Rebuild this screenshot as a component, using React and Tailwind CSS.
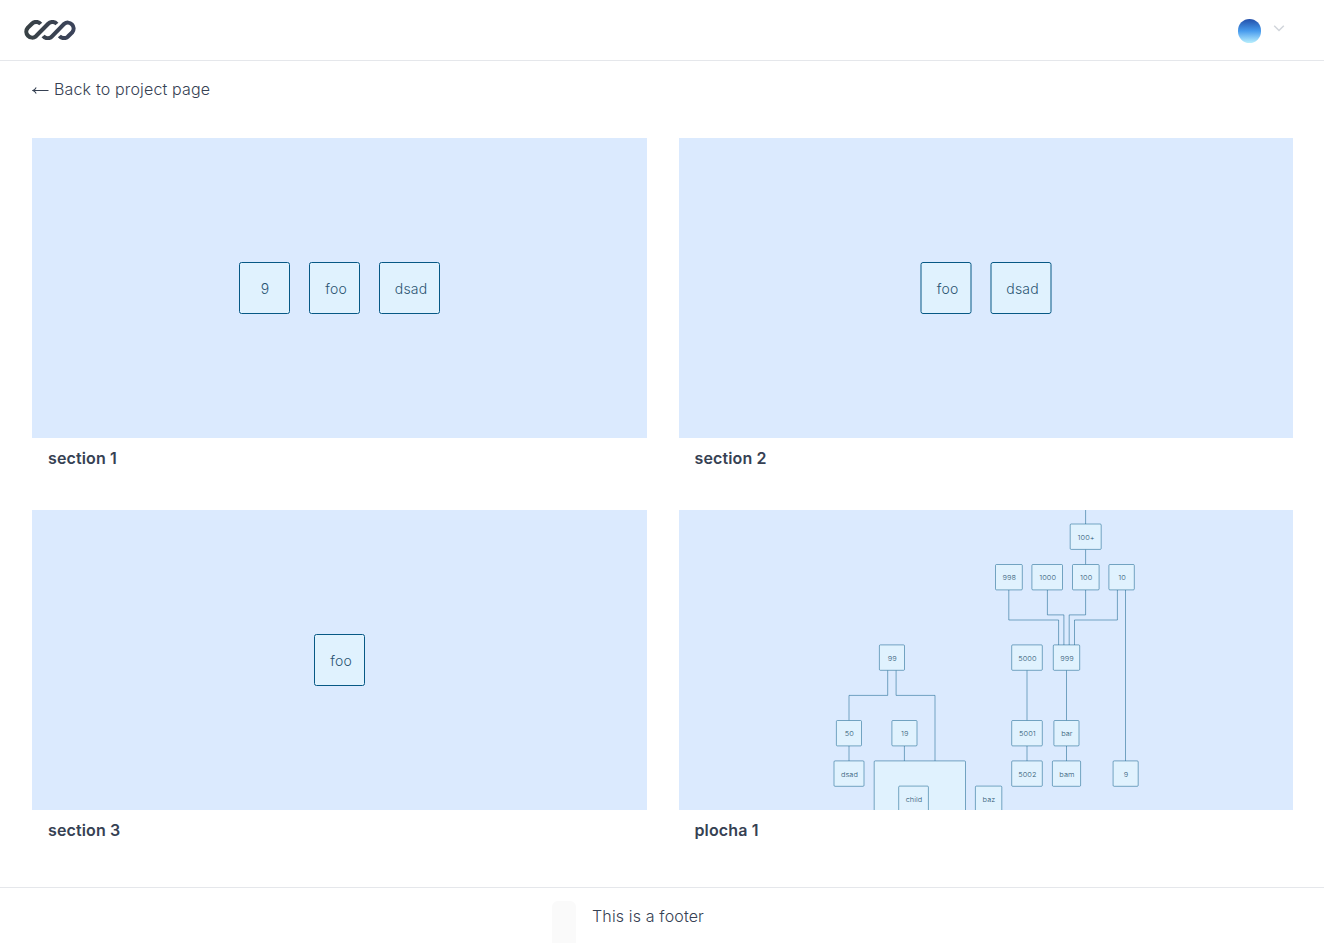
import React from "react";

const sections = [
  {
    title: "section 1",
    font: 14,
    stroke: 1,
    radius: 2,
    nodes: [
      ["9", 207.5, 124.5, 50, 51],
      ["foo", 277.5, 124.5, 50, 51],
      ["dsad", 347.5, 124.5, 60, 51],
    ],
    lines: [],
  },
  {
    title: "section 2",
    font: 14,
    stroke: 1,
    radius: 2,
    nodes: [
      ["foo", 242, 124.5, 50, 51],
      ["dsad", 312, 124.5, 60, 51],
    ],
    lines: [],
  },
  {
    title: "section 3",
    font: 14,
    stroke: 1,
    radius: 2,
    nodes: [["foo", 282.5, 124.5, 50, 51]],
    lines: [],
  },
  {
    title: "plocha 1",
    font: 7,
    stroke: 0.5,
    radius: 1,
    nodes: [
      ["100+", 391.2, 14, 31, 25.4],
      ["998", 316.5, 54.5, 26.8, 25.4],
      ["1000", 352.9, 54.5, 30.6, 25.4],
      ["100", 393.5, 54.5, 26.6, 25.4],
      ["10", 429.9, 54.5, 25.4, 25.4],
      ["99", 200.4, 134.9, 25.1, 25.4],
      ["5000", 332.7, 134.9, 30.6, 25.4],
      ["999", 374.3, 134.9, 26.4, 25.4],
      ["50", 157.4, 210.5, 25.1, 25.4],
      ["19", 212.9, 210.5, 25.1, 25.4],
      ["5001", 332.7, 210.5, 30.6, 25.4],
      ["bar", 374.9, 210.5, 25.1, 25.4],
      ["dsad", 155, 250.9, 30, 25.4],
      ["", 195.2, 250.9, 91.3, 80],
      ["child", 219.7, 276.1, 29.7, 40],
      ["baz", 296.4, 276.1, 26.4, 40],
      ["5002", 332.7, 250.9, 30.6, 25.4],
      ["bam", 373.4, 250.9, 28.2, 25.4],
      ["9", 434.1, 250.9, 25.1, 25.4],
    ],
    lines: [
      "M406.6 0V14",
      "M406.6 39.4V54.5",
      "M329.8 79.9V110H379.6V134.9",
      "M368.4 79.9V104.9H384.9V134.9",
      "M406.6 79.9V104.9H390.2V134.9",
      "M438.4 79.9V110H395.5V134.9",
      "M446.5 79.9V250.9",
      "M208.7 160.3V185.4H170V210.5",
      "M217.1 160.3V185.4H256V250.9",
      "M170 235.9V250.9",
      "M225.4 235.9V250.9",
      "M348 160.3V210.5",
      "M348 235.9V250.9",
      "M387.5 160.3V210.5",
      "M387.5 235.9V250.9",
    ],
  },
];

function Diagram({ nodes, lines, font, stroke, radius }) {
  const large = font > 10;
  const stretch = large ? 1 : 1.12;
  return (
    <svg className="block h-[300px] w-full bg-[#dbeafe]" aria-hidden="true">
      <g fill="none" stroke="#075985" strokeWidth={stroke}>
        {lines.map((d) => (
          <path key={d} d={d} />
        ))}
      </g>
      {nodes.map(([label, x, y, w, h]) => (
        <g key={label + x + y}>
          <rect x={x} y={y} width={w} height={h} rx={radius} fill="#e0f2fe" stroke="#075985" strokeWidth={stroke} />
          <text
            transform={`translate(${x + w / 2 + (large ? (label.length > 1 ? 1.6 : 0.5) : 0.4)} ${y + (large ? 31.5 : 15.7)}) scale(${stretch} 1)`}
            textAnchor="middle"
            fontSize={large ? font : 6.6}
            letterSpacing={large ? 0.2 : 0.05}
            className="fill-[#2b5572] font-light"
          >
            {label}
          </text>
        </g>
      ))}
    </svg>
  );
}

function Logo() {
  return (
    <svg width="52" height="20" viewBox="0 0 52 20" fill="none" strokeWidth="4.1" className="block">
      <defs>
        <linearGradient id="logo" x1="0" x2="52" y1="0" y2="0" gradientUnits="userSpaceOnUse">
          <stop stopColor="#384144" />
          <stop offset="1" stopColor="#3b435b" />
        </linearGradient>
      </defs>
      <g stroke="url(#logo)">
        <path d="M16.7 4A6 6 0 0 0 7.9 3.7L3.7 7.9A5.9 5.9 0 0 0 11.9 16.3L24.2 3.8A5.9 5.9 0 0 1 32.9 4" />
        <path d="M19.1 16A5.9 5.9 0 0 0 28 16.3L40.2 3.8A5.9 5.9 0 0 1 48.4 12.1L44.2 16.3A5.9 5.9 0 0 1 35.4 16" />
      </g>
    </svg>
  );
}

export default function App() {
  return (
    <div className="flex h-[943px] flex-col overflow-hidden bg-white font-['Inter',sans-serif] text-base text-gray-700">
      <header className="flex h-[61px] shrink-0 items-center justify-between border-b border-gray-200 pl-6 pr-[39px]">
        <Logo />
        <div className="flex items-center gap-3">
          <span className="mt-0.5 mr-[0.5px] h-6 w-[23px] rounded-full bg-linear-to-b from-[#2450aa] via-[#479bed] to-[#b9effc]" />
          <svg width="12" height="12" viewBox="0 0 12 12" fill="none" stroke="#d1d5db" strokeWidth="1.5" className="mb-1">
            <path d="M1.2 3.7L6 8.5L10.8 3.7" />
          </svg>
        </div>
      </header>
      <main className="w-[1325px] grow px-8 pt-4">
        <a href="#" className="flex h-6 items-center gap-[5px] leading-6 font-light tracking-[0.16px]">
          <svg width="17" height="8" viewBox="0 0 17 8" fill="none" stroke="currentColor" strokeWidth="1.1" className="mt-[3px]">
            <path d="M1 3.5H16.5M4.2 0.5Q3 2.7 1 3.5Q3 4.3 4.2 6.5" />
          </svg>
          <span>Back to project page</span>
        </a>
        <div className="mt-[37px] grid grid-cols-2 gap-x-8 gap-y-8">
          {sections.map((section) => (
            <article key={section.title} className="h-[340px]">
              <Diagram {...section} />
              <h2 className="px-4 pt-2 leading-6 font-semibold tracking-[0.13px]">{section.title}</h2>
            </article>
          ))}
        </div>
      </main>
      <footer className="flex h-14 shrink-0 gap-4 border-t border-gray-200 pl-[552px]">
        <div className="mt-[13px] w-6 rounded-t-md bg-[#fafafa]" />
        <p className="mt-4 leading-6 font-light tracking-[0.15px]">This is a footer</p>
      </footer>
    </div>
  );
}
